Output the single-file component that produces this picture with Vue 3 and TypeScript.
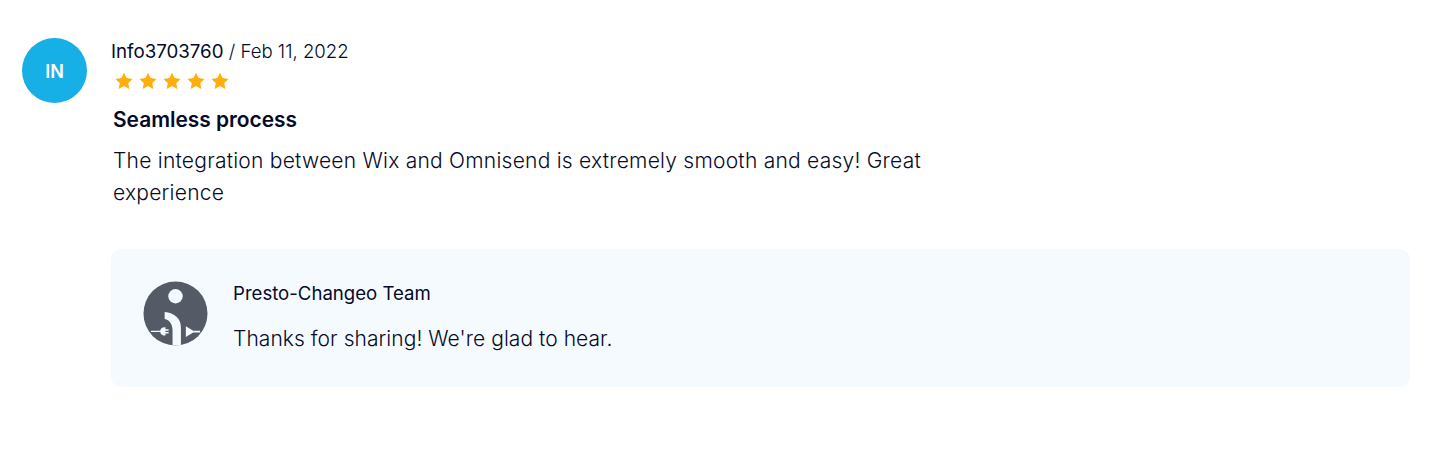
<script setup lang="ts">
const stars: number[] = [1, 2, 3, 4, 5]
</script>

<template>
  <div class="review">
    <div class="avatar">IN</div>
    <div class="body">
      <div class="meta"><span class="name">Info3703760</span> <span class="date">/ Feb 11, 2022</span></div>
      <div class="stars">
        <svg v-for="s in stars" :key="s" class="star" viewBox="0 0 20 20"><path d="M10 .8l2.900 6 6.600.9-4.800 4.500 1.200 6.600L10 15.600l-5.900 3.200 1.200-6.600L.5 7.700l6.600-.9z" fill="#ffae0c"/></svg>
      </div>
      <h3 class="title">Seamless process</h3>
      <p class="text">The integration between Wix and Omnisend is extremely smooth and easy! Great experience</p>
      <div class="reply">
        <svg class="logo" viewBox="0 0 66 66">
          <defs><clipPath id="c"><circle cx="33" cy="33" r="32.5"/></clipPath></defs>
          <circle cx="33" cy="33" r="32.5" fill="#555b66"/>
          <g clip-path="url(#c)" fill="#f5fafe">
            <circle cx="33" cy="15.500" r="7.300"/>
            <path d="M22 31.500C32 32.500 38.500 38 38.500 47V66H30V50C30 44 27 39.500 22 38.500z"/>
            <path d="M8 50.500h9.500c.3-2.200 2-3.600 4-3.600h1.300v2H26v1.500h-3.200v1.500H26v1.500h-3.200v2H21.500c-2 0-3.700-1.400-4-3.600H8z"/>
            <path d="M43.500 46l7.500 4.500H58v1.800H51l-7.500 4.500z"/>
          </g>
        </svg>
        <div class="reply-body">
          <div class="team">Presto-Changeo Team</div>
          <p class="reply-text">Thanks for sharing! We're glad to hear.</p>
        </div>
      </div>
    </div>
  </div>
</template>

<style>
html, body { background: #fff; }
</style>

<style scoped>
.review {
  display: flex;
  width: 1438px;
  height: 476px;
  box-sizing: border-box;
  padding: 38px 28px 0 22px;
  font-family: Inter, "Liberation Sans", sans-serif;
  color: #050a28;
}
.avatar {
  flex: none;
  width: 65px;
  height: 65px;
  box-sizing: border-box;
  padding-top: 2px;
  border-radius: 50%;
  background: #17b0e6;
  color: #fff;
  font-size: 18px;
  font-weight: 600;
  display: flex;
  align-items: center;
  justify-content: center;
}
.body { flex: 1; margin-left: 25px; min-width: 0; }
.meta { font-size: 18.7px; line-height: 26px; margin-left: -1px; }
.date { font-size: 18.6px; font-weight: 300; color: #050a28; }
.stars { display: flex; gap: 6px; margin: 7px 0 0 3px; height: 20px; }
.star { width: 18px; height: 18px; }
.title { margin: 14px 0 0 1px; font-size: 20.9px; line-height: 28px; font-weight: 600; }
.text { margin: 11px 0 0 1px; width: 830px; font-size: 21px; line-height: 32px; font-weight: 300; letter-spacing: 0.24px; }
.reply {
  display: flex;
  margin: 40px 0 0 -1px;
  height: 138px;
  box-sizing: border-box;
  padding: 32px;
  border-radius: 10px;
  background: #f5fafe;
}
.logo { flex: none; width: 65px; height: 65px; }
.reply-body { margin-left: 25px; }
.team { font-size: 18.6px; line-height: 25px; }
.reply-text { margin: 18px 0 0; font-size: 21px; line-height: 30px; font-weight: 300; letter-spacing: 0.05px; }
</style>
